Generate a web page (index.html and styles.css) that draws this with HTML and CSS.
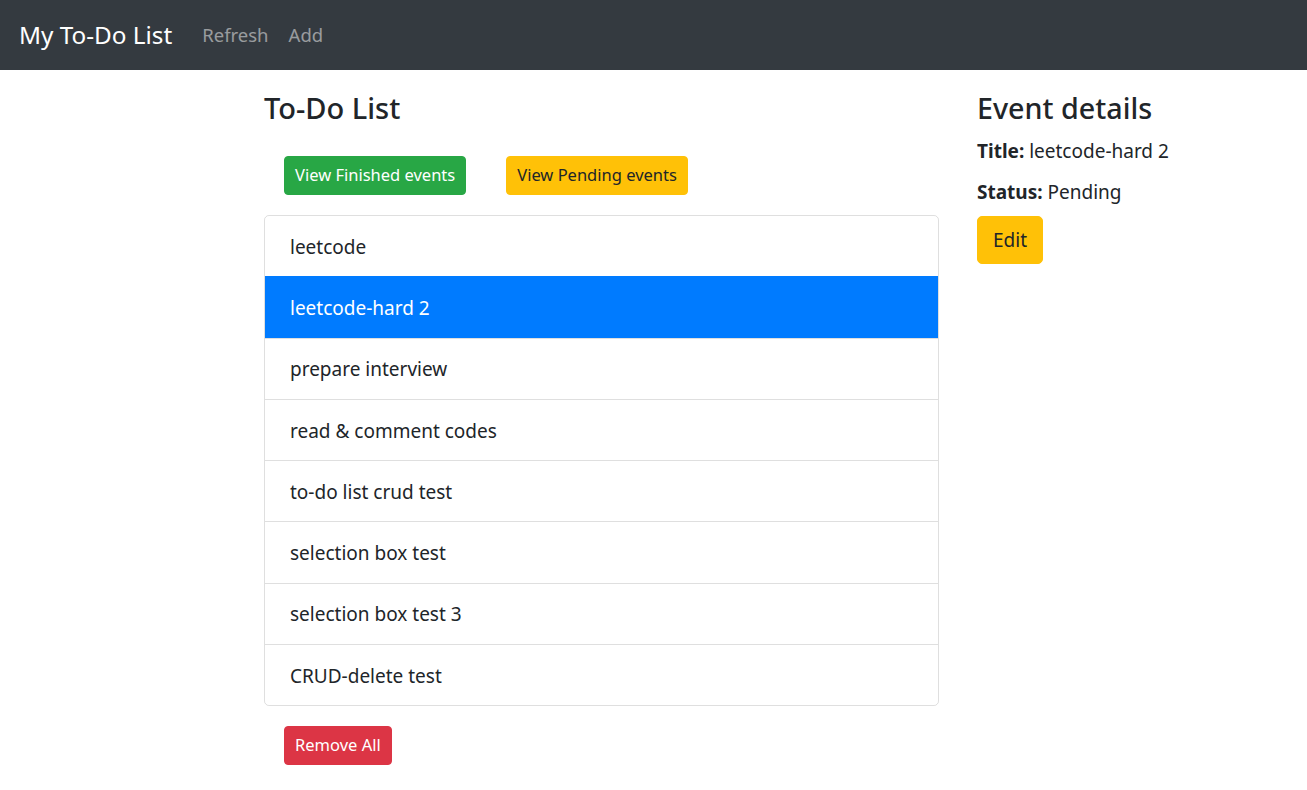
FILE: index.html
```html
<!DOCTYPE html>
<html lang="en">
<head>
<meta charset="utf-8">
<title>My To-Do List</title>
<link rel="stylesheet" href="styles.css">
</head>
<body>
<nav class="navbar">
  <a class="brand" href="#">My To-Do List</a>
  <a class="nav-link" href="#">Refresh</a>
  <a class="nav-link" href="#">Add</a>
</nav>
<main class="main">
  <section class="list-col">
    <h4 class="heading">To-Do List</h4>
    <div class="filter-row">
      <button class="btn btn-sm btn-success">View Finished events</button>
      <button class="btn btn-sm btn-warning">View Pending events</button>
    </div>
    <ul class="list-group">
      <li class="list-item">leetcode</li>
      <li class="list-item active">leetcode-hard 2</li>
      <li class="list-item">prepare interview</li>
      <li class="list-item">read &amp; comment codes</li>
      <li class="list-item">to-do list crud test</li>
      <li class="list-item">selection box test</li>
      <li class="list-item">selection box test 3</li>
      <li class="list-item">CRUD-delete test</li>
    </ul>
    <div class="footer-row">
      <button class="btn btn-sm btn-danger">Remove All</button>
    </div>
  </section>
  <section class="detail-col">
    <h4 class="heading">Event details</h4>
    <p class="detail"><strong>Title:</strong> leetcode-hard 2</p>
    <p class="detail detail-last"><strong>Status:</strong> Pending</p>
    <button class="btn btn-warning btn-edit">Edit</button>
  </section>
</main>
</body>
</html>
```
FILE: styles.css
```css
* { box-sizing: border-box; }
html, body {
  margin: 0;
  padding: 0;
  background: #fff;
}
body {
  font-family: "Noto Sans", "Open Sans", "Liberation Sans", sans-serif;
  font-size: 20px;
  line-height: 1.5;
  color: #212529;
}
.navbar {
  height: 70px;
  background: #343a40;
  display: flex;
  align-items: center;
  padding: 0 19px;
}
.brand {
  color: #fff;
  text-decoration: none;
  font-size: 24.3px;
  margin-right: 20px;
  line-height: 1.5;
}
.nav-link {
  color: rgba(255, 255, 255, 0.5);
  text-decoration: none;
  padding: 0 10px;
  font-size: 18.5px;
}
.main {
  display: flex;
  gap: 38px;
  padding-left: 264px;
}
.list-col {
  width: 675px;
  flex: none;
}
.detail-col {
  flex: 1;
}
.heading {
  font-size: 29px;
  font-weight: 500;
  line-height: 36px;
  margin: 20px 0 10px;
}
.detail-col .heading {
  font-size: 28.7px;
}
.filter-row {
  display: flex;
  gap: 40px;
  padding: 20px;
}
.footer-row {
  display: flex;
  padding: 20px;
}
.btn {
  border: 1px solid transparent;
  font-family: inherit;
  cursor: pointer;
  color: #212529;
}
.btn-sm {
  height: 39px;
  font-size: 16.5px;
  line-height: 1.5;
  padding: 0 10px;
  border-radius: 4px;
}
.btn-success { background: #28a745; border-color: #28a745; color: #fff; }
.btn-warning { background: #ffc107; border-color: #ffc107; color: #212529; }
.btn-danger { background: #dc3545; border-color: #dc3545; color: #fff; }
.btn-edit {
  height: 48px;
  width: 66px;
  font-size: 19px;
  padding: 0;
  border-radius: 5px;
}
.list-group {
  list-style: none;
  margin: 0;
  padding: 0;
  border: 1px solid rgba(0, 0, 0, 0.125);
  border-radius: 5px;
  overflow: hidden;
}
.list-item {
  height: 61.25px;
  display: flex;
  align-items: center;
  padding: 2px 25px 0;
  font-size: 19px;
  border-top: 1px solid rgba(0, 0, 0, 0.125);
}
.list-item:first-child { border-top: 0; height: 60.25px; }
.list-item.active {
  background: #007bff;
  color: #fff;
  border-top-color: #007bff;
  margin: 0 -1px;
  padding-left: 26px;
}
.detail {
  margin: 0 0 10px;
  line-height: 31px;
  font-size: 19px;
}
.detail-last {
  margin-bottom: 8px;
}
.detail strong { font-weight: 700; }
```
